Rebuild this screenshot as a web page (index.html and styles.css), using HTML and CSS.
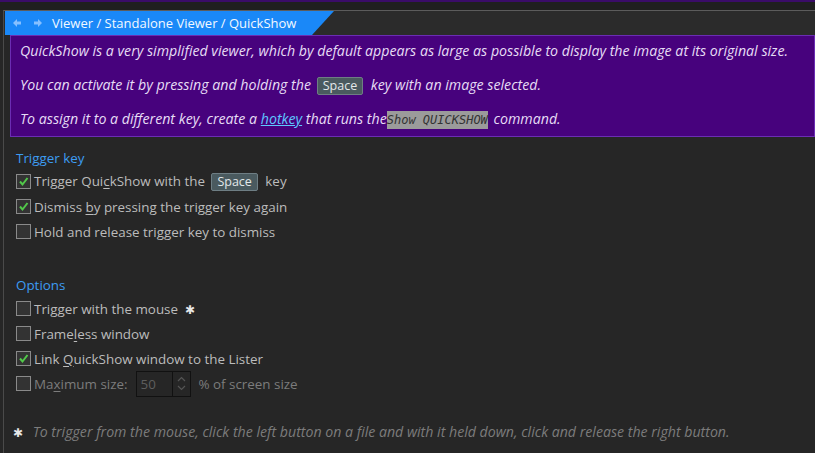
FILE: index.html
```html
<!DOCTYPE html>
<html lang="en">
<head>
    <meta charset="UTF-8">
    <title>Viewer / Standalone Viewer / QuickShow</title>
    <link rel="stylesheet" href="styles.css">
</head>
<body>
    <div class="topstrip"></div>
    <div class="panel">
        <div class="crumbbar">
            <div class="crumb">
                <span class="nav">
                    <svg width="10" height="10" viewBox="0 0 10 10"><path d="M5 1 L1 5 L5 9 L5 6.5 L9 6.5 L9 3.5 L5 3.5 Z" fill="#86c0ff"/></svg>
                    <svg width="10" height="10" viewBox="0 0 10 10"><path d="M5 1 L9 5 L5 9 L5 6.5 L1 6.5 L1 3.5 L5 3.5 Z" fill="#86c0ff"/></svg>
                </span>
                <span class="crumb-text">Viewer / Standalone Viewer / QuickShow</span>
            </div>
        </div>

        <div class="info">
            <p>QuickShow is a very simplified viewer, which by default appears as large as possible to display the image at its original size.</p>
            <p>You can activate it by pressing and holding the <span class="key">Space</span> key with an image selected.</p>
            <p>To assign it to a different key, create a <a href="#">hotkey</a> that runs the<code>Show QUICKSHOW</code> command.</p>
        </div>

        <div class="section">
            <div class="section-title">Trigger key</div>
            <label class="check on"><span>Trigger Qui<u>c</u>kShow with the <span class="key">Space</span> key</span></label>
            <label class="check on"><span>Dismiss <u>b</u>y pressing the trigger key again</span></label>
            <label class="check"><span>Hold and release trigger key to dismiss</span></label>
        </div>

        <div class="section options">
            <div class="section-title">Options</div>
            <label class="check"><span>Trigger with the mouse <span class="star">✱</span></span></label>
            <label class="check"><span>Frame<u>l</u>ess window</span></label>
            <label class="check on"><span>Link <u>Q</u>uickShow window to the Lister</span></label>
            <div class="check size-row">
                <span>Ma<u>x</u>imum size:</span>
                <span class="spin">
                    <span class="spin-val">50</span>
                    <span class="spin-arrows">
                        <svg width="9" height="6" viewBox="0 0 9 6"><path d="M1 5 L4.5 1.5 L8 5" fill="none" stroke="#555" stroke-width="1.2"/></svg>
                        <svg width="9" height="6" viewBox="0 0 9 6"><path d="M1 1 L4.5 4.5 L8 1" fill="none" stroke="#555" stroke-width="1.2"/></svg>
                    </span>
                </span>
                <span class="unit">% of screen size</span>
            </div>
        </div>

        <div class="footnote"><span class="star">✱</span> To trigger from the mouse, click the left button on a file and with it held down, click and release the right button.</div>
    </div>
</body>
</html>
```

FILE: styles.css
```css
* { margin: 0; padding: 0; box-sizing: border-box; }
:root {
    --bg: #262626; --line: #555; --blue: #1a88f8; --purple: #47027d;
    --text: #bcbcbc; --dim: #7c7c7c; --accent: #3d9cf2;
}
body {
    font-family: "Open Sans", Lato, sans-serif; font-size: 13.4px;
    background: var(--bg); color: var(--text); height: 453px; overflow: hidden;
}
.topstrip { height: 10px; background: #1f1f1f; border-top: 2px solid #3a0c68; }
.panel {
    margin-left: 3px; border-left: 1px solid #4a4a4a; border-top: 1px solid #5c5c5c;
    min-height: 443px;
}
.crumbbar { height: 24px; background: #2b2b2b; padding-left: 1px; }
.crumb {
    width: 329px; height: 24px; background: var(--blue); color: #f2f8ff;
    display: flex; align-items: center; gap: 9px; padding-left: 7px;
    clip-path: polygon(0 0, 100% 0, calc(100% - 22px) 100%, 0 100%);
}
.nav { display: flex; gap: 11px; align-items: center; }
.nav svg { display: block; }
.crumb-text { font-size: 13px; }
.info {
    margin-left: 6px; background: var(--purple); border: 1px solid #6b2db3;
    padding: 0 9px; color: #e6ddf5; font-style: italic; font-size: 14.2px;
}
.info p { height: 34px; line-height: 30px; white-space: nowrap; }
.info p:last-child { height: 32px; }
.info a { color: #5ec8ff; text-decoration: underline; }
.info code {
    font-family: "DejaVu Sans Mono", monospace; font-style: italic; font-size: 12px;
    background: #9b9b9b; color: #333; padding: 2px 0; margin-right: 2px;
}
.key {
    display: inline-block; font-style: normal; font-size: 12.5px; line-height: 16px;
    background: #4a5a5f; border: 1px solid #6e7e84; border-radius: 2px;
    color: #e2e8ea; padding: 0 5px; margin: 0 4px 0 2px;
}
.section { padding: 10px 0 0 12px; }
.options { padding-top: 30px; }
.section-title { color: var(--accent); line-height: 22px; }
.check {
    display: flex; align-items: center; height: 25px; gap: 3px; white-space: nowrap;
}
.check::before {
    content: ""; width: 13px; height: 13px; flex: none;
    border: 1px solid #8a8a8a; background: #333;
}
.check.on::before {
    background: #333 url("data:image/svg+xml,%3Csvg xmlns='http://www.w3.org/2000/svg' width='11' height='11'%3E%3Cpath d='M2 5.5 L4.5 8.5 L9.5 2' fill='none' stroke='%2352c94a' stroke-width='2'/%3E%3C/svg%3E") center no-repeat;
}
.check .key { margin-left: 3px; }
.check u { text-decoration-thickness: 1px; text-underline-offset: 2px; }
.star { color: #e8e8e8; font-size: 12px; margin-left: 3px; }
.size-row { color: var(--dim); }
.spin {
    display: flex; width: 55px; height: 26px; margin-left: 6px;
    border: 1px solid #111; background: #262626;
}
.spin-val { flex: 1; color: #5e5e5e; padding-left: 3px; line-height: 24px; border-right: 1px solid #111; }
.spin-arrows { width: 17px; display: flex; flex-direction: column; align-items: center; justify-content: center; gap: 3px; }
.spin-arrows svg { display: block; }
.unit { margin-left: 4px; }
.footnote {
    margin: 26px 0 0 9px; font-style: italic; font-size: 14.15px; color: var(--dim);
}
.footnote .star { margin: 0 6px 0 0; font-style: normal; }
```
